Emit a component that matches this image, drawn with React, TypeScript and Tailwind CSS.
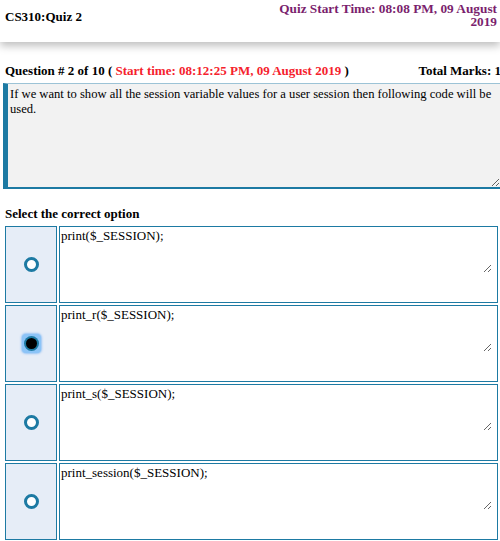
import React from "react";

const opts = [
  { t: "print($_SESSION);", sel: false },
  { t: "print_r($_SESSION);", sel: true },
  { t: "print_s($_SESSION);", sel: false },
  { t: "print_session($_SESSION);", sel: false },
];

function Radio({ sel }: { sel: boolean }) {
  if (sel) {
    return (
      <div className="w-[19px] h-[19px] rounded-[4px] bg-[#8cc4f7] shadow-[0_0_2px_1px_rgba(120,180,245,0.7)] flex items-center justify-center">
        <div className="w-[15px] h-[15px] rounded-full bg-[#1d7aa3] flex items-center justify-center">
          <div className="w-[11px] h-[11px] rounded-full bg-black" />
        </div>
      </div>
    );
  }
  return <div className="w-[15px] h-[15px] rounded-full border-[3px] border-[#1d7aa3] bg-white" />;
}

export default function App() {
  return (
    <div
      className="w-[500px] h-[541px] overflow-hidden bg-white text-black"
      style={{ fontFamily: '"Liberation Serif", "Times New Roman", serif' }}
    >
      <div className="h-[42px] flex justify-between px-[5px] pt-[2px] shadow-[0_4px_8px_rgba(0,0,0,0.25)] relative">
        <div className="font-bold text-[13px] pt-[5px]">CS310:Quiz 2</div>
        <div className="font-bold text-[13.3px] leading-[13px] text-right text-[#7b1f6e] w-[232px] -mr-[2px]">
          Quiz Start Time: 08:08 PM, 09 August 2019
        </div>
      </div>
      <div className="mt-[21px] flex justify-between w-[501px] pl-[5px] font-bold text-[13px] leading-[15px]">
        <div>
          Question # 2 of 10 ({" "}
          <span className="text-[#f5222d]">Start time: 08:12:25 PM, 09 August 2019</span> )
        </div>
        <div>Total Marks: 1</div>
      </div>
      <div className="ml-[3px] mt-[5px] w-[510px]">
        <textarea
          readOnly
          defaultValue="If we want to show all the session variable values for a user session then following code will be used."
          className="block w-[497px] h-[106px] bg-[#f2f2f2] border-l-[5px] border-b-[2px] border-t-[1px] border-t-[#9cc3d6] border-l-[#1d7aa3] border-b-[#1d7aa3] px-[2px] pt-[3px] text-[12.6px] leading-[15px] outline-none"
          style={{ fontFamily: '"Liberation Serif", "Times New Roman", serif' }}
        />
      </div>
      <div className="mt-[17px] pl-[5px] font-bold text-[13px] leading-[15px]">Select the correct option</div>
      <div className="mt-[5px] flex flex-col gap-[2px] pl-[5px]">
        {opts.map((o, i) => (
          <div key={i} className="flex gap-[2px] h-[77px]">
            <div className="w-[52px] h-full border-[1.5px] border-[#1d7aa3] bg-[#e6edf7] flex items-center justify-center">
              <Radio sel={o.sel} />
            </div>
            <div className="w-[439px] h-full bg-white border-[1.5px] border-[#1d7aa3] pr-[5px]">
              <textarea
                readOnly
                defaultValue={o.t}
                className="block w-full h-[46px] bg-white px-[1px] pt-[1px] text-[13px] leading-[15px] outline-none"
                style={{ fontFamily: '"Liberation Serif", "Times New Roman", serif' }}
              />
            </div>
          </div>
        ))}
      </div>
    </div>
  );
}
